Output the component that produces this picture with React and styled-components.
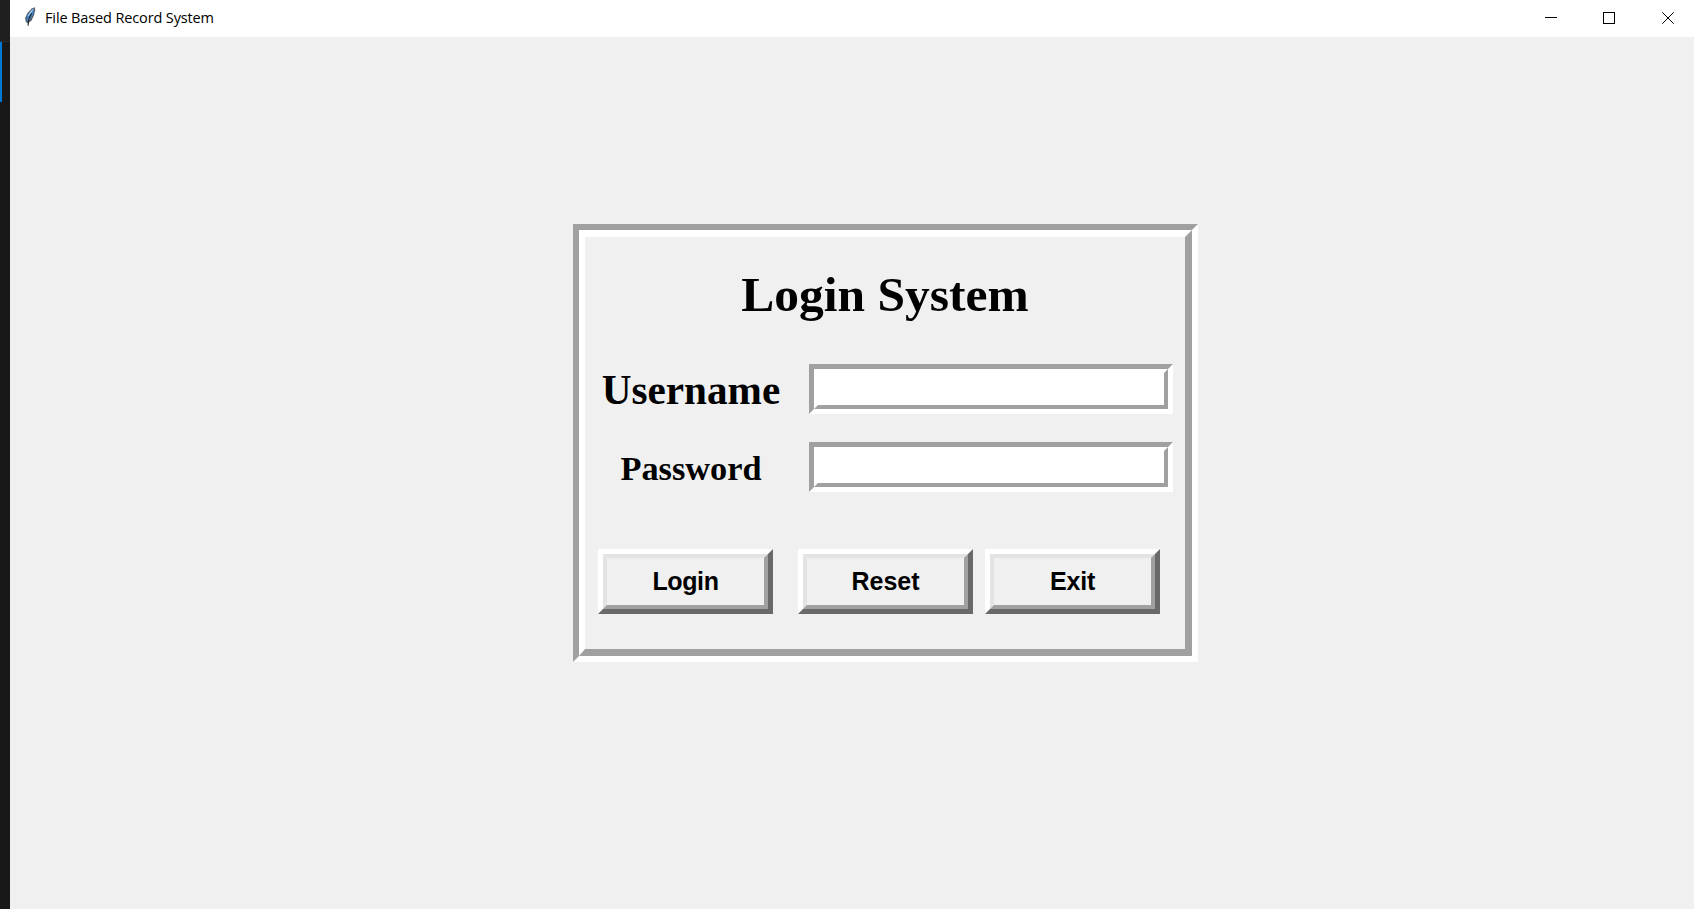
import React from "react";
import styled, { createGlobalStyle } from "styled-components";

const face = "#f0f0f0";
const shade = "#a0a0a0";

const GlobalStyle = createGlobalStyle`
  * { box-sizing: border-box; }
  body { margin: 0; background: ${face}; overflow: hidden; }
`;

const Screen = styled.div`
  display: flex;
  width: 1694px;
  height: 909px;
`;

const EditorEdge = styled.div`
  width: 10px;
  flex: none;
  display: flex;
  flex-direction: column;
  background: #181818;
`;

const EdgeTop = styled.div`
  height: 42px;
  background: #1f1f1f;
  border-bottom: 1px solid #2b2b2b;
`;

const ActiveMark = styled.div`
  width: 2px;
  height: 60px;
  background: #0078d4;
`;

const Window = styled.div`
  flex: 1;
  display: flex;
  flex-direction: column;
  background: ${face};
`;

const TitleBar = styled.header`
  display: flex;
  height: 37px;
  flex: none;
  padding-left: 14px;
  background: #fff;
`;

const Feather = styled.svg`
  width: 13px;
  height: 20px;
  margin-top: 7px;
  flex: none;
`;

const Caption = styled.span`
  margin-left: 8px;
  font: 14.5px/36px "Open Sans", "Noto Sans", sans-serif;
  letter-spacing: -0.13px;
  white-space: nowrap;
  color: #000;
`;

const Controls = styled.div`
  display: flex;
  margin: 12px 20px 0 auto;
`;

const ControlIcon = styled.svg`
  width: 12px;
  height: 12px;
  margin-left: ${(p) => p.$gap || 0}px;
  display: block;
  stroke: #000;
  fill: none;
`;

const Client = styled.main`
  flex: 1;
  padding: 187px 0 0 563px;
`;

const Frame = styled.section`
  width: 625px;
  height: 438px;
  border: 6px solid;
  border-color: ${shade} #fff #fff ${shade};
`;

const FrameInner = styled.div`
  height: 100%;
  border: solid;
  border-width: 7px 7px 7px 6px;
  border-color: #fff ${shade} ${shade} #fff;
`;

const Heading = styled.h1`
  margin: 0;
  padding-top: 30px;
  height: 127px;
  text-align: center;
  font: bold 49.5px/56px "Liberation Serif", serif;
  color: #000;
`;

const Row = styled.div`
  display: flex;
  height: 50px;
  margin-bottom: ${(p) => p.$after}px;
`;

const Label = styled.label`
  width: 224px;
  padding: 3px 12px 0 0;
  text-align: center;
  font: bold ${(p) => p.$size}px/46px "Liberation Serif", serif;
  color: #000;
`;

const FieldFrame = styled.div`
  width: 364px;
  border: 5px solid;
  border-color: ${shade} #fff #fff ${shade};
`;

const Field = styled.input`
  display: block;
  width: 100%;
  height: 40px;
  padding: 0 4px;
  border: 4px solid;
  border-color: #fff ${shade} ${shade} #fff;
  border-radius: 0;
  outline: none;
  background: #fff;
  font: 25px "Liberation Serif", serif;
`;

const Actions = styled.div`
  display: flex;
  margin-left: 13px;
`;

const Button = styled.button`
  width: 175px;
  height: 65px;
  margin-right: ${(p) => p.$gap || 0}px;
  padding: 0;
  border: 5px solid;
  border-color: #fff #696969 #696969 #fff;
  border-radius: 0;
  background: ${face};
  color: #000;
`;

const ButtonFace = styled.span`
  display: block;
  height: 55px;
  border: 4px solid;
  border-color: #e3e3e3 ${shade} ${shade} #e3e3e3;
  font: bold 25px/47px "Liberation Sans", sans-serif;
  letter-spacing: ${(p) => p.$tracking || 0}px;
`;

export default function App() {
  return (
    <>
      <GlobalStyle />
      <Screen>
        <EditorEdge>
          <EdgeTop />
          <ActiveMark />
        </EditorEdge>
        <Window>
          <TitleBar>
            <Feather viewBox="0 0 13 20">
              <path d="M11 .3 7.5 1.5 3.3 6.2 1 11.2l.8 3.7 2.2 1.5 3.7-3.2 2.3-5 1.2-5z" fill="#59616b" />
              <path d="M10.4 1.2 7.4 2.9 3.3 8 2.2 13.2l2.3 1 4.2-5.7z" fill="#4284c8" />
              <path d="M9.9 1.5 7.3 3.3 4 7.8l.1 2 3.6-4.6z" fill="#a3c4e8" />
              <path d="M7.6 6.2 5 11.5 4 18.8" stroke="#20242a" strokeWidth="1.1" fill="none" />
            </Feather>
            <Caption>File Based Record System</Caption>
            <Controls>
              <ControlIcon viewBox="0 0 12 12"><path d="M0 5.5H12" /></ControlIcon>
              <ControlIcon $gap={46} viewBox="0 0 12 12"><rect x=".5" y=".5" width="11" height="11" /></ControlIcon>
              <ControlIcon $gap={47} viewBox="0 0 12 12"><path d="M.3.3 11.7 11.7M11.7.3.3 11.7" /></ControlIcon>
            </Controls>
          </TitleBar>
          <Client>
            <Frame>
              <FrameInner>
                <Heading>Login System</Heading>
                <Row $after={28}>
                  <Label htmlFor="username" $size={41.2}>Username</Label>
                  <FieldFrame><Field id="username" /></FieldFrame>
                </Row>
                <Row $after={57}>
                  <Label htmlFor="password" $size={34.3}>Password</Label>
                  <FieldFrame><Field id="password" type="password" /></FieldFrame>
                </Row>
                <Actions>
                  <Button $gap={25}><ButtonFace $tracking={-0.4}>Login</ButtonFace></Button>
                  <Button $gap={12}><ButtonFace>Reset</ButtonFace></Button>
                  <Button><ButtonFace $tracking={-0.2}>Exit</ButtonFace></Button>
                </Actions>
              </FrameInner>
            </Frame>
          </Client>
        </Window>
      </Screen>
    </>
  );
}
